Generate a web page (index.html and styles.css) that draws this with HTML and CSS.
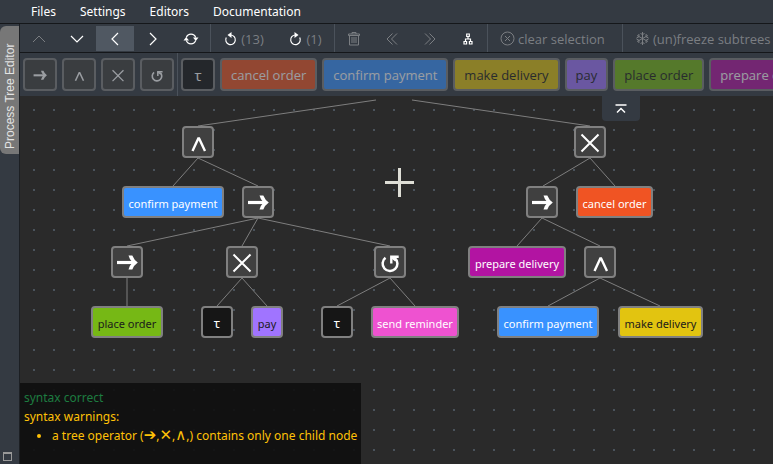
FILE: index.html
```html
<!DOCTYPE html>
<html lang="en">
<head>
<meta charset="utf-8">
<title>Process Tree Editor</title>
<link rel="stylesheet" href="styles.css">
</head>
<body>
<svg class="sprite" width="0" height="0" aria-hidden="true">
  <symbol id="op-sequence" viewBox="2 2 28 28"><path d="M6 16.500h18" stroke-width="3.200"/><path class="solid" d="M17.500 9.500h3.800q1.800 4.500 5.500 7q-3.700 2.500-5.500 7h-3.800q1-4 4-7q-3-3-4-7z"/></symbol>
  <symbol id="op-parallel" viewBox="2 2 28 28"><path d="M10.500 25 16.300 12.500h.8L23 25" stroke-width="2.400"/></symbol>
  <symbol id="op-choice" viewBox="2 2 28 28"><path d="m7.500 8.500 17 17M24.500 8.500l-17 17" stroke-width="2"/></symbol>
  <symbol id="op-loop" viewBox="2 2 28 28"><path d="M11.500 11.800a7.400 7.400 0 1 0 9.500.4" stroke-width="2.500"/><path d="M17.300 17.500v-6.700h7.400" stroke-width="2.400"/><path d="m17.500 11 4.500 3.500" stroke-width="2.500"/></symbol>
</svg>
<nav class="menubar">
  <a href="#">Files</a>
  <a href="#">Settings</a>
  <a href="#">Editors</a>
  <a href="#">Documentation</a>
</nav>
<div class="workspace">
  <aside class="sidebar">
    <button class="side-tab" type="button">Process Tree Editor</button>
    <button class="side-window" type="button" aria-label="Window"></button>
  </aside>
  <main class="editor">
    <div class="toolbar">
      <div class="group">
        <button class="tool" type="button" aria-label="Up" disabled><svg viewBox="0 0 16 16"><path d="m2 11 6-6 6 6"/></svg></button>
        <button class="tool" type="button" aria-label="Down"><svg viewBox="0 0 16 16"><path d="m2 5 6 6 6-6"/></svg></button>
        <button class="tool active" type="button" aria-label="Left"><svg viewBox="0 0 16 16"><path d="M11 2 5 8l6 6"/></svg></button>
        <button class="tool" type="button" aria-label="Right"><svg viewBox="0 0 16 16"><path d="m5 2 6 6-6 6"/></svg></button>
        <button class="tool" type="button" aria-label="Refresh"><svg viewBox="0 0 16 16"><path d="M3.300 6.500a5 5 0 0 1 9.400 0M12.700 9.500a5 5 0 0 1-9.400 0"/><path class="solid" d="M10 6.500h5.500L12.800 10zM.5 9.500H6L3.200 6z"/></svg></button>
      </div>
      <div class="group">
        <button class="tool undo" type="button" aria-label="Undo"><svg viewBox="0 0 16 16"><path d="M7.500 4a4.800 4.800 0 1 1-4.200 2.500"/><path class="solid" d="M8.500 1v6L4.500 4z"/></svg><span>(13)</span></button>
        <button class="tool redo" type="button" aria-label="Redo"><svg viewBox="0 0 16 16"><path d="M7.500 4a4.800 4.800 0 1 0 4.200 2.500"/><path class="solid" d="M6.500 1v6l4-3z"/></svg><span>(1)</span></button>
      </div>
      <div class="group">
        <button class="tool" type="button" aria-label="Delete" disabled><svg viewBox="0 0 16 16"><path d="M2.500 3h11v1.500h-11zM6 3V1.500h4V3M3.500 4.500V14h9V4.500M6 6v6M8 6v6M10 6v6"/></svg></button>
        <button class="tool" type="button" aria-label="Shift left" disabled><svg viewBox="0 0 16 16"><path d="M8.500 2.500 3 8l5.500 5.500M13 2.500 7.500 8l5.500 5.500"/></svg></button>
        <button class="tool" type="button" aria-label="Shift right" disabled><svg viewBox="0 0 16 16"><path d="M3 2.500 8.500 8 3 13.500M7.500 2.500 13 8l-5.500 5.500"/></svg></button>
        <button class="tool" type="button" aria-label="Layout tree"><svg viewBox="0 0 16 16"><path d="M6.700 3h2.600v2.500H6.700zM8 5.500V8M5.500 10.500V8h5v2.500M4 10.500h2.600V13H4zM9.400 10.500H12V13H9.400z"/></svg></button>
      </div>
      <div class="group">
        <button class="tool clear" type="button" disabled><svg viewBox="0 0 16 16"><circle cx="7.500" cy="7.500" r="6.500"/><path d="m5 5 5 5M10 5l-5 5"/></svg><span>clear selection</span></button>
      </div>
      <div class="group">
        <button class="tool freeze" type="button" disabled><svg viewBox="0 0 16 16"><path d="M7.500 1v13M2 4.500l11 6M13 4.500l-11 6M5.500 2l2 2 2-2M5.500 13l2-2 2 2M1.500 7 4 5.700 3.800 3M13.500 8 11 9.300l.2 2.700M13.500 7 11 5.700l.2-2.700M1.500 8 4 9.300 3.800 12"/></svg><span>(un)freeze subtrees</span></button>
      </div>
    </div>
    <div class="palette">
      <div class="chips">
        <button class="chip operator" type="button" aria-label="Sequence" disabled><svg><use href="#op-sequence"/></svg></button>
        <button class="chip operator" type="button" aria-label="Parallel" disabled><svg><use href="#op-parallel"/></svg></button>
        <button class="chip operator" type="button" aria-label="Choice" disabled><svg><use href="#op-choice"/></svg></button>
        <button class="chip operator" type="button" aria-label="Loop" disabled><svg><use href="#op-loop"/></svg></button>
      </div>
      <div class="chips">
        <button class="chip tau" type="button" disabled>τ</button>
        <button class="chip orange" type="button" disabled>cancel order</button>
        <button class="chip blue" type="button" disabled>confirm payment</button>
        <button class="chip yellow" type="button" disabled>make delivery</button>
        <button class="chip violet" type="button" disabled>pay</button>
        <button class="chip green" type="button" disabled>place order</button>
        <button class="chip purple" type="button" disabled>prepare delivery</button>
      </div>
    </div>
    <div class="canvas">
      <svg class="edges" width="753" height="368">
        <path d="M178 30 356 4M570 30 392 4M178 62 153 90M178 62l60 28M238 122 107 150M238 122l-16 28M238 122l132 28M107 182v28M222 182l-25 28M222 182l25 28M370 182l-53 28M370 182l25 28M570 62l-47 28M570 62l25 28M522 122l-25 28M522 122l58 28M580 182l-52 28M580 182l60 28"/>
      </svg>
      <div class="node operator n1"><svg><use href="#op-parallel"/></svg></div>
      <div class="node operator n2"><svg><use href="#op-choice"/></svg></div>
      <div class="node blue n3">confirm payment</div>
      <div class="node operator n4"><svg><use href="#op-sequence"/></svg></div>
      <div class="node operator n5"><svg><use href="#op-sequence"/></svg></div>
      <div class="node orange n6">cancel order</div>
      <div class="node operator n7"><svg><use href="#op-sequence"/></svg></div>
      <div class="node operator n8"><svg><use href="#op-choice"/></svg></div>
      <div class="node operator n9"><svg><use href="#op-loop"/></svg></div>
      <div class="node purple n10">prepare delivery</div>
      <div class="node operator n11"><svg><use href="#op-parallel"/></svg></div>
      <div class="node green n12">place order</div>
      <div class="node tau n13">τ</div>
      <div class="node violet n14">pay</div>
      <div class="node tau n15">τ</div>
      <div class="node pink n16">send reminder</div>
      <div class="node blue n17">confirm payment</div>
      <div class="node yellow n18">make delivery</div>
      <svg class="cursor" viewBox="0 0 29 29"><path d="M14.500 0v29M0 14.500h29"/></svg>
      <button class="collapse" type="button" aria-label="Collapse toolbar"><svg viewBox="0 0 16 16"><path d="M2.500 4h11M4 11.500l4-4 4 4"/></svg></button>
      <section class="messages">
        <p class="ok">syntax correct</p>
        <p>syntax warnings:</p>
        <ul><li>a tree operator (<span class="glyph">➔</span>,<span class="glyph">✕</span>,<span class="glyph">∧</span>,) contains only one child node</li></ul>
      </section>
    </div>
  </main>
</div>
</body>
</html>
```
FILE: styles.css
```css
* { box-sizing: border-box; }

body {
  margin: 0;
  height: 100vh;
  display: flex;
  flex-direction: column;
  overflow: hidden;
  background: #343a42;
  color: #fff;
  font: 13px/20px "Open Sans", "DejaVu Sans", sans-serif;
}

.sprite { position: absolute; }

button {
  margin: 0;
  padding: 0;
  border: 0;
  background: none;
  color: inherit;
  font: inherit;
}

.menubar {
  flex: none;
  display: flex;
  gap: 24px;
  height: 24px;
  padding: 2px 31px 0;
  border-bottom: 1px solid #15171a;
  font-family: "Noto Sans", sans-serif;
  font-size: 12px;
}

.menubar a { color: inherit; text-decoration: none; }

.workspace { flex: 1; min-height: 0; display: flex; }

.sidebar {
  flex: none;
  width: 20px;
  display: flex;
  flex-direction: column;
  justify-content: space-between;
  align-items: flex-start;
  padding: 2px 0 3px;
  border-right: 1px solid #1c1f23;
}

.side-tab {
  width: 19px;
  height: 128px;
  padding-top: 5px;
  border-radius: 0 6px 6px 0;
  background: #777;
  color: #e4e4e4;
  font: 12px/18px "Liberation Sans", sans-serif;
  text-align: start;
  writing-mode: vertical-rl;
  transform: rotate(180deg);
  white-space: nowrap;
}

.side-window {
  width: 9px;
  height: 9px;
  margin-left: 3px;
  border: 1px solid #999;
  border-top-width: 2px;
}

.editor { flex: 1; min-width: 0; display: flex; flex-direction: column; }

.toolbar {
  flex: none;
  display: flex;
  height: 29px;
  border-bottom: 1px solid #15171a;
  overflow: hidden;
}

.group { flex: none; display: flex; }
.group + .group { border-left: 1px solid #4b525b; }

.tool {
  flex: none;
  display: flex;
  align-items: center;
  justify-content: center;
  gap: 2px;
  width: 38px;
  height: 25px;
  margin-top: 2px;
  white-space: nowrap;
}

.tool svg { width: 16px; height: 16px; stroke-width: 1.2; }
.tool:disabled svg { stroke-width: 1; }
.tool span { color: #7b7e82; }
.tool:disabled { color: #7b7e82; }
.tool.active { background: #505862; }
.tool.undo { width: 65px; }
.tool.redo { width: 58px; }
.tool.clear { width: 134px; justify-content: flex-start; padding-left: 12px; }
.tool.freeze { width: auto; padding: 0 12px; }

svg { fill: none; stroke: currentColor; flex: none; }
.solid { fill: currentColor; stroke: none; }

.palette {
  flex: none;
  display: flex;
  height: 43px;
  overflow: hidden;
}

.chips { flex: none; display: flex; gap: 5px; padding: 5px 3px; }
.chips + .chips { border-left: 1px solid #4b525b; }

.chip {
  flex: none;
  min-width: 34px;
  height: 33px;
  padding: 0 9px;
  border: 2px solid #808080;
  border-radius: 4px;
  white-space: nowrap;
  opacity: 0.5;
}

.chip.operator { display: grid; place-items: center; padding: 0; }
.chip.operator svg { width: 18px; height: 18px; }
.chip.tau { padding: 0; font-size: 15px; }

.operator { background: #404040; color: #fff; }
.tau { background: #161616; color: #fff; }
.orange { background: #f05423; color: #fff; }
.blue { background: #3992ff; color: #fff; }
.yellow { background: #e2c410; color: #1b1b1b; }
.violet { background: #a074ff; color: #1b1b1b; }
.green { background: #76b815; color: #1b1b1b; }
.purple { background: #b214a2; color: #fff; }
.pink { background: #ee52d0; color: #fff; }

.canvas {
  flex: 1;
  min-height: 0;
  position: relative;
  overflow: hidden;
  background-color: #2a2a2a;
  background-image: linear-gradient(#2a2a2a 18px, transparent 18px), linear-gradient(90deg, #2a2a2a 18px, #4a535c 18px);
  background-size: 20px 20px;
  background-position: -5px -5px;
}

.edges { position: absolute; left: 0; top: 0; stroke: #7e7e7e; }

.node {
  position: absolute;
  min-width: 32px;
  height: 32px;
  border: 2px solid #808080;
  border-radius: 4px;
  font-family: "Noto Sans", sans-serif;
  font-size: 11px;
  line-height: 31px;
  text-align: center;
  white-space: nowrap;
}

.node.operator svg { display: block; width: 28px; height: 28px; }
.node.tau { font-size: 13px; }

.n1 { left: 162px; top: 30px; }
.n2 { left: 554px; top: 30px; }
.n3 { left: 102px; top: 90px; width: 102px; }
.n4 { left: 222px; top: 90px; }
.n5 { left: 506px; top: 90px; }
.n6 { left: 556px; top: 90px; width: 77px; }
.n7 { left: 91px; top: 150px; }
.n8 { left: 206px; top: 150px; }
.n9 { left: 354px; top: 150px; }
.n10 { left: 448px; top: 150px; width: 98px; }
.n11 { left: 564px; top: 150px; }
.n12 { left: 71px; top: 210px; width: 72px; }
.n13 { left: 181px; top: 210px; }
.n14 { left: 231px; top: 210px; }
.n15 { left: 301px; top: 210px; }
.n16 { left: 351px; top: 210px; width: 88px; }
.n17 { left: 477px; top: 210px; width: 102px; }
.n18 { left: 598px; top: 210px; width: 85px; }

.cursor {
  position: absolute;
  left: 365px;
  top: 72px;
  width: 29px;
  height: 29px;
  stroke: #deded6;
  stroke-width: 3;
}

.collapse {
  position: absolute;
  left: 582px;
  top: 0;
  width: 38px;
  height: 25px;
  display: grid;
  place-items: center;
  border-radius: 0 0 4px 4px;
  background: #343a42;
}

.collapse svg { width: 16px; height: 16px; stroke-width: 1.5; }

.messages {
  position: absolute;
  left: 0;
  bottom: 0;
  padding: 5px 4px 18px;
  background: rgb(14 14 14 / 90%);
  color: #ffc107;
  font-family: "Noto Sans", "DejaVu Sans", sans-serif;
  font-size: 12px;
}

.messages p { margin: 0; line-height: 19px; }
.messages .ok { color: #1d7c40; }
.messages ul { margin: 0; padding-left: 28px; }
.glyph { font-size: 15px; line-height: 1; }
```
